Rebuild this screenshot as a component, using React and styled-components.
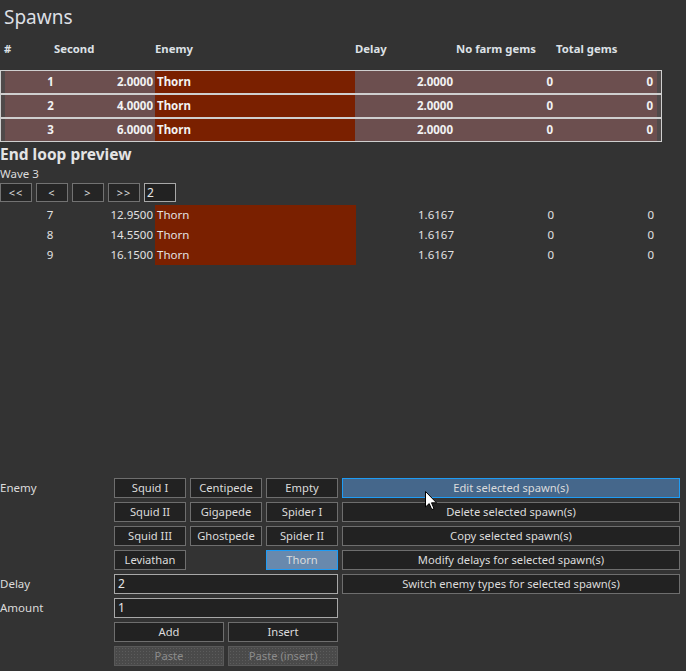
import React from "react";
import styled, { createGlobalStyle } from "styled-components";

const Global = createGlobalStyle`
  html, body { margin: 0; padding: 0; background: #333333; }
  body { font-family: "Noto Sans", "Open Sans", sans-serif; color: #dcdcdc; }
  * { box-sizing: border-box; }
`;

const Page = styled.div`
  position: relative;
  width: 686px;
  height: 671px;
  display: flex;
  flex-direction: column;
  background: #333333;
  padding-bottom: 5px;
  overflow: hidden;
`;

const Title = styled.div`
  height: 36px;
  line-height: 34px;
  padding-left: 4px;
  font-size: 19px;
  font-weight: 400;
  color: #dcdfe4;
`;

const HeaderRow = styled.div`
  display: grid;
  grid-template-columns: 50px 101px 200px 101px 100px auto;
  padding-left: 4px;
  height: 26px;
  line-height: 26px;
  font-size: 11.3px;
  font-weight: 700;
  color: #dde1e6;
  margin-bottom: 8px;
`;

const Table = styled.div`
  width: 662px;
  display: flex;
  flex-direction: column;
`;

const Row = styled.div`
  display: grid;
  grid-template-columns: 99px 55px 200px 100px 100px 100px 1fr;
  height: 24px;
  border: 1px solid #cfcfcf;
  background: #6c4f4f;
  box-shadow: inset 4px 0 0 #4f4a4a, inset -4px 0 0 #4f4a4a;
  font-size: 11.5px;
  font-weight: 700;
  color: #f2f2f2;
  line-height: 22px;
`;

const PreviewRow = styled.div`
  display: grid;
  grid-template-columns: 100px 55px 201px 100px 100px 100px;
  height: 20px;
  line-height: 20px;
  font-size: 11.5px;
  color: #e2e2e2;
`;

const Cell = styled.div`
  text-align: ${(p) => p.$align || "right"};
  padding: 0 2px;
  white-space: nowrap;
  overflow: hidden;
  background: ${(p) => (p.$enemy ? "#7a2000" : "transparent")};
`;

const SectionTitle = styled.div`
  font-size: 15.5px;
  font-weight: 700;
  line-height: 21px;
  color: #e4e4e4;
  margin-top: 2px;
`;

const Wave = styled.div`
  font-size: 11.5px;
  line-height: 17px;
  color: #dcdcdc;
`;

const NavBar = styled.div`
  display: flex;
  gap: 4px;
  margin-top: 1px;
  margin-bottom: 3px;
`;

const NavButton = styled.div`
  width: 32px;
  height: 19px;
  border: 1px solid #727272;
  background: #252525;
  font-size: 11px;
  line-height: 17px;
  text-align: center;
  letter-spacing: 1px;
  color: #dcdcdc;
`;

const NavInput = styled.div`
  width: 32px;
  height: 19px;
  border: 1px solid #a8a8a8;
  background: #222222;
  font-size: 12px;
  line-height: 17px;
  padding-left: 2px;
  color: #e6e6e6;
`;

const Panel = styled.div`
  margin-top: auto;
  display: grid;
  grid-template-columns: 110px 72px 72px 72px 338px;
  grid-auto-rows: 20px;
  column-gap: 4px;
  row-gap: 4px;
`;

const Label = styled.div`
  grid-column: 1;
  grid-row: ${(p) => p.$row};
  font-size: 11.5px;
  line-height: 20px;
  color: #dcdcdc;
`;

const Btn = styled.div`
  grid-column: ${(p) => p.$col || "auto"};
  grid-row: ${(p) => p.$row || "auto"};
  border: 1px solid ${(p) => (p.$active ? "#1e9cf5" : "#6e6e6e")};
  background: ${(p) =>
    p.$active === "light" ? "#6889ad" : p.$active ? "#45678b" : "#222222"};
  font-size: 11.2px;
  line-height: 18px;
  text-align: center;
  white-space: nowrap;
  color: #dcdcdc;
`;

const DisabledBtn = styled.div`
  border: 1px solid #595959;
  background-color: #4a4a4a;
  background-image: radial-gradient(#5c5c5c 0.6px, transparent 0.8px);
  background-size: 3px 3px;
  font-size: 11.2px;
  line-height: 18px;
  text-align: center;
  color: #8c8c8c;
`;

const Input = styled.div`
  grid-column: 2 / span 3;
  grid-row: ${(p) => p.$row};
  border: 1px solid #a8a8a8;
  background: #222222;
  font-size: 12px;
  line-height: 18px;
  padding-left: 3px;
  color: #e6e6e6;
`;

const Pair = styled.div`
  grid-column: 2 / span 3;
  grid-row: ${(p) => p.$row};
  display: grid;
  grid-template-columns: 1fr 1fr;
  column-gap: 4px;
`;

const Cursor = styled.svg`
  position: absolute;
  left: 425px;
  top: 491px;
  pointer-events: none;
`;

const spawns = [
  ["1", "2.0000", "Thorn", "2.0000", "0", "0"],
  ["2", "4.0000", "Thorn", "2.0000", "0", "0"],
  ["3", "6.0000", "Thorn", "2.0000", "0", "0"],
];

const preview = [
  ["7", "12.9500", "Thorn", "1.6167", "0", "0"],
  ["8", "14.5500", "Thorn", "1.6167", "0", "0"],
  ["9", "16.1500", "Thorn", "1.6167", "0", "0"],
];

const enemies = [
  ["Squid I", "Centipede", "Empty"],
  ["Squid II", "Gigapede", "Spider I"],
  ["Squid III", "Ghostpede", "Spider II"],
  ["Leviathan", null, "Thorn"],
];

const actions = [
  "Edit selected spawn(s)",
  "Delete selected spawn(s)",
  "Copy selected spawn(s)",
  "Modify delays for selected spawn(s)",
  "Switch enemy types for selected spawn(s)",
];

function Cells({ data }) {
  return (
    <>
      <Cell $align="center">{data[0]}</Cell>
      <Cell>{data[1]}</Cell>
      <Cell $align="left" $enemy>
        {data[2]}
      </Cell>
      <Cell>{data[3]}</Cell>
      <Cell>{data[4]}</Cell>
      <Cell>{data[5]}</Cell>
    </>
  );
}

export default function App() {
  return (
    <>
      <Global />
      <Page>
        <Title>Spawns</Title>
        <HeaderRow>
          <span>#</span>
          <span>Second</span>
          <span>Enemy</span>
          <span>Delay</span>
          <span>No farm gems</span>
          <span>Total gems</span>
        </HeaderRow>
        <Table>
          {spawns.map((s) => (
            <Row key={s[0]}>
              <Cells data={s} />
            </Row>
          ))}
        </Table>
        <SectionTitle>End loop preview</SectionTitle>
        <Wave>Wave 3</Wave>
        <NavBar>
          <NavButton>&lt;&lt;</NavButton>
          <NavButton>&lt;</NavButton>
          <NavButton>&gt;</NavButton>
          <NavButton>&gt;&gt;</NavButton>
          <NavInput>2</NavInput>
        </NavBar>
        <div>
          {preview.map((s) => (
            <PreviewRow key={s[0]}>
              <Cells data={s} />
            </PreviewRow>
          ))}
        </div>
        <Panel>
          <Label $row={1}>Enemy</Label>
          {enemies.map((row, r) =>
            row.map((name, c) =>
              name ? (
                <Btn
                  key={name}
                  $row={r + 1}
                  $col={c + 2}
                  $active={name === "Thorn" ? "light" : undefined}
                >
                  {name}
                </Btn>
              ) : null
            )
          )}
          {actions.map((a, i) => (
            <Btn key={a} $row={i + 1} $col={5} $active={i === 0 ? true : undefined}>
              {a}
            </Btn>
          ))}
          <Label $row={5}>Delay</Label>
          <Input $row={5}>2</Input>
          <Label $row={6}>Amount</Label>
          <Input $row={6}>1</Input>
          <Pair $row={7}>
            <Btn>Add</Btn>
            <Btn>Insert</Btn>
          </Pair>
          <Pair $row={8}>
            <DisabledBtn>Paste</DisabledBtn>
            <DisabledBtn>Paste (insert)</DisabledBtn>
          </Pair>
        </Panel>
        <Cursor width="13" height="20" viewBox="0 0 13 20">
          <path
            d="M0.5 0.5 L0.5 16 L4.2 12.6 L6.8 18.6 L9 17.6 L6.5 11.8 L11.5 11.8 Z"
            fill="#ffffff"
            stroke="#000000"
            strokeWidth="1"
            strokeLinejoin="miter"
          />
        </Cursor>
      </Page>
    </>
  );
}
